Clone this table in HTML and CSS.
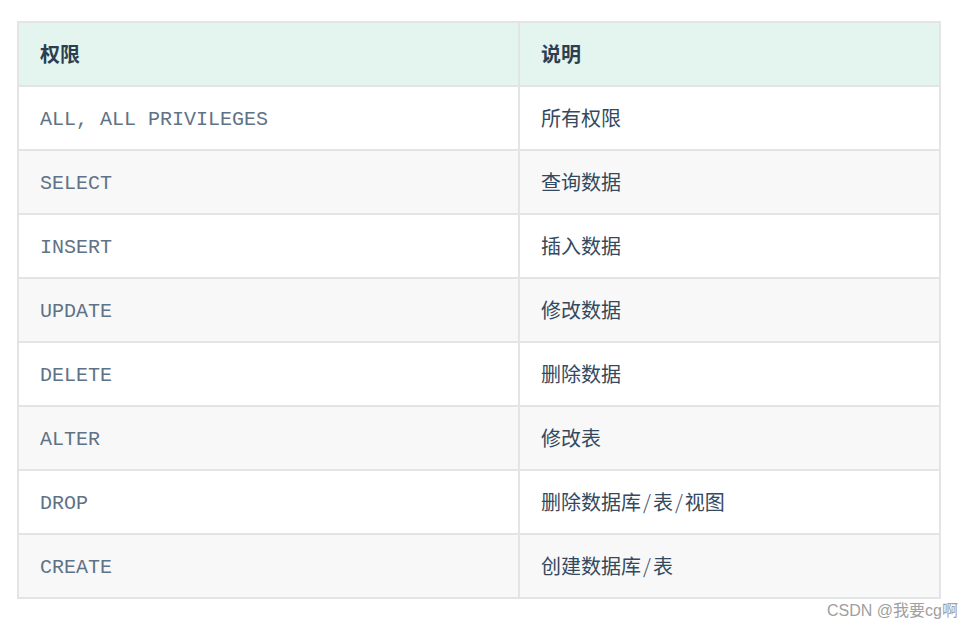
FILE: index.html
```html
<!DOCTYPE html>
<html lang="zh">
<head>
<meta charset="utf-8">
<link rel="stylesheet" href="styles.css">
</head>
<body>
<div class="page">
<table class="priv">
  <colgroup><col class="c1"><col class="c2"></colgroup>
  <thead>
    <tr><th>权限</th><th>说明</th></tr>
  </thead>
  <tbody>
    <tr><td><code>ALL, ALL PRIVILEGES</code></td><td>所有权限</td></tr>
    <tr><td><code>SELECT</code></td><td>查询数据</td></tr>
    <tr><td><code>INSERT</code></td><td>插入数据</td></tr>
    <tr><td><code>UPDATE</code></td><td>修改数据</td></tr>
    <tr><td><code>DELETE</code></td><td>删除数据</td></tr>
    <tr><td><code>ALTER</code></td><td>修改表</td></tr>
    <tr><td><code>DROP</code></td><td>删除数据库<span class="sl">/</span>表<span class="sl">/</span>视图</td></tr>
    <tr><td><code>CREATE</code></td><td>创建数据库<span class="sl">/</span>表</td></tr>
  </tbody>
</table>
<div class="mark">CSDN @我要cg啊</div>
</div>
</body>
</html>
```

FILE: styles.css
```css
html, body {
  margin: 0;
  padding: 0;
  background: #fff;
}
.page {
  padding: 21px 0 0 17px;
  width: 957px;
  font-family: "Noto Sans CJK SC", "Noto Sans", sans-serif;
}
.priv {
  border-collapse: collapse;
  width: 922px;
  table-layout: fixed;
  color: #34495e;
  font-size: 20px;
}
.c1 { width: 501px; }
.c2 { width: 421px; }
.priv th, .priv td {
  border: 2px solid #e2e4e6;
  height: 62px;
  padding: 0 21px;
  text-align: left;
  vertical-align: middle;
  line-height: 24px;
}
.priv th {
  background: #e3f5ee;
  font-weight: 700;
  color: #2c3e50;
}
.priv tbody tr:nth-child(even) td {
  background: #f8f8f8;
}
.priv code {
  font-family: "Liberation Mono", "Courier New", monospace;
  font-size: 20px;
  color: #607286;
}
.sl {
  padding: 0 2px;
  font-weight: 300;
}
.mark {
  text-align: right;
  padding-right: 16px;
  margin-top: 1px;
  font-family: "Liberation Sans", "Noto Sans CJK SC", sans-serif;
  font-size: 16px;
  color: #a0a0a0;
  line-height: 22px;
}
```
